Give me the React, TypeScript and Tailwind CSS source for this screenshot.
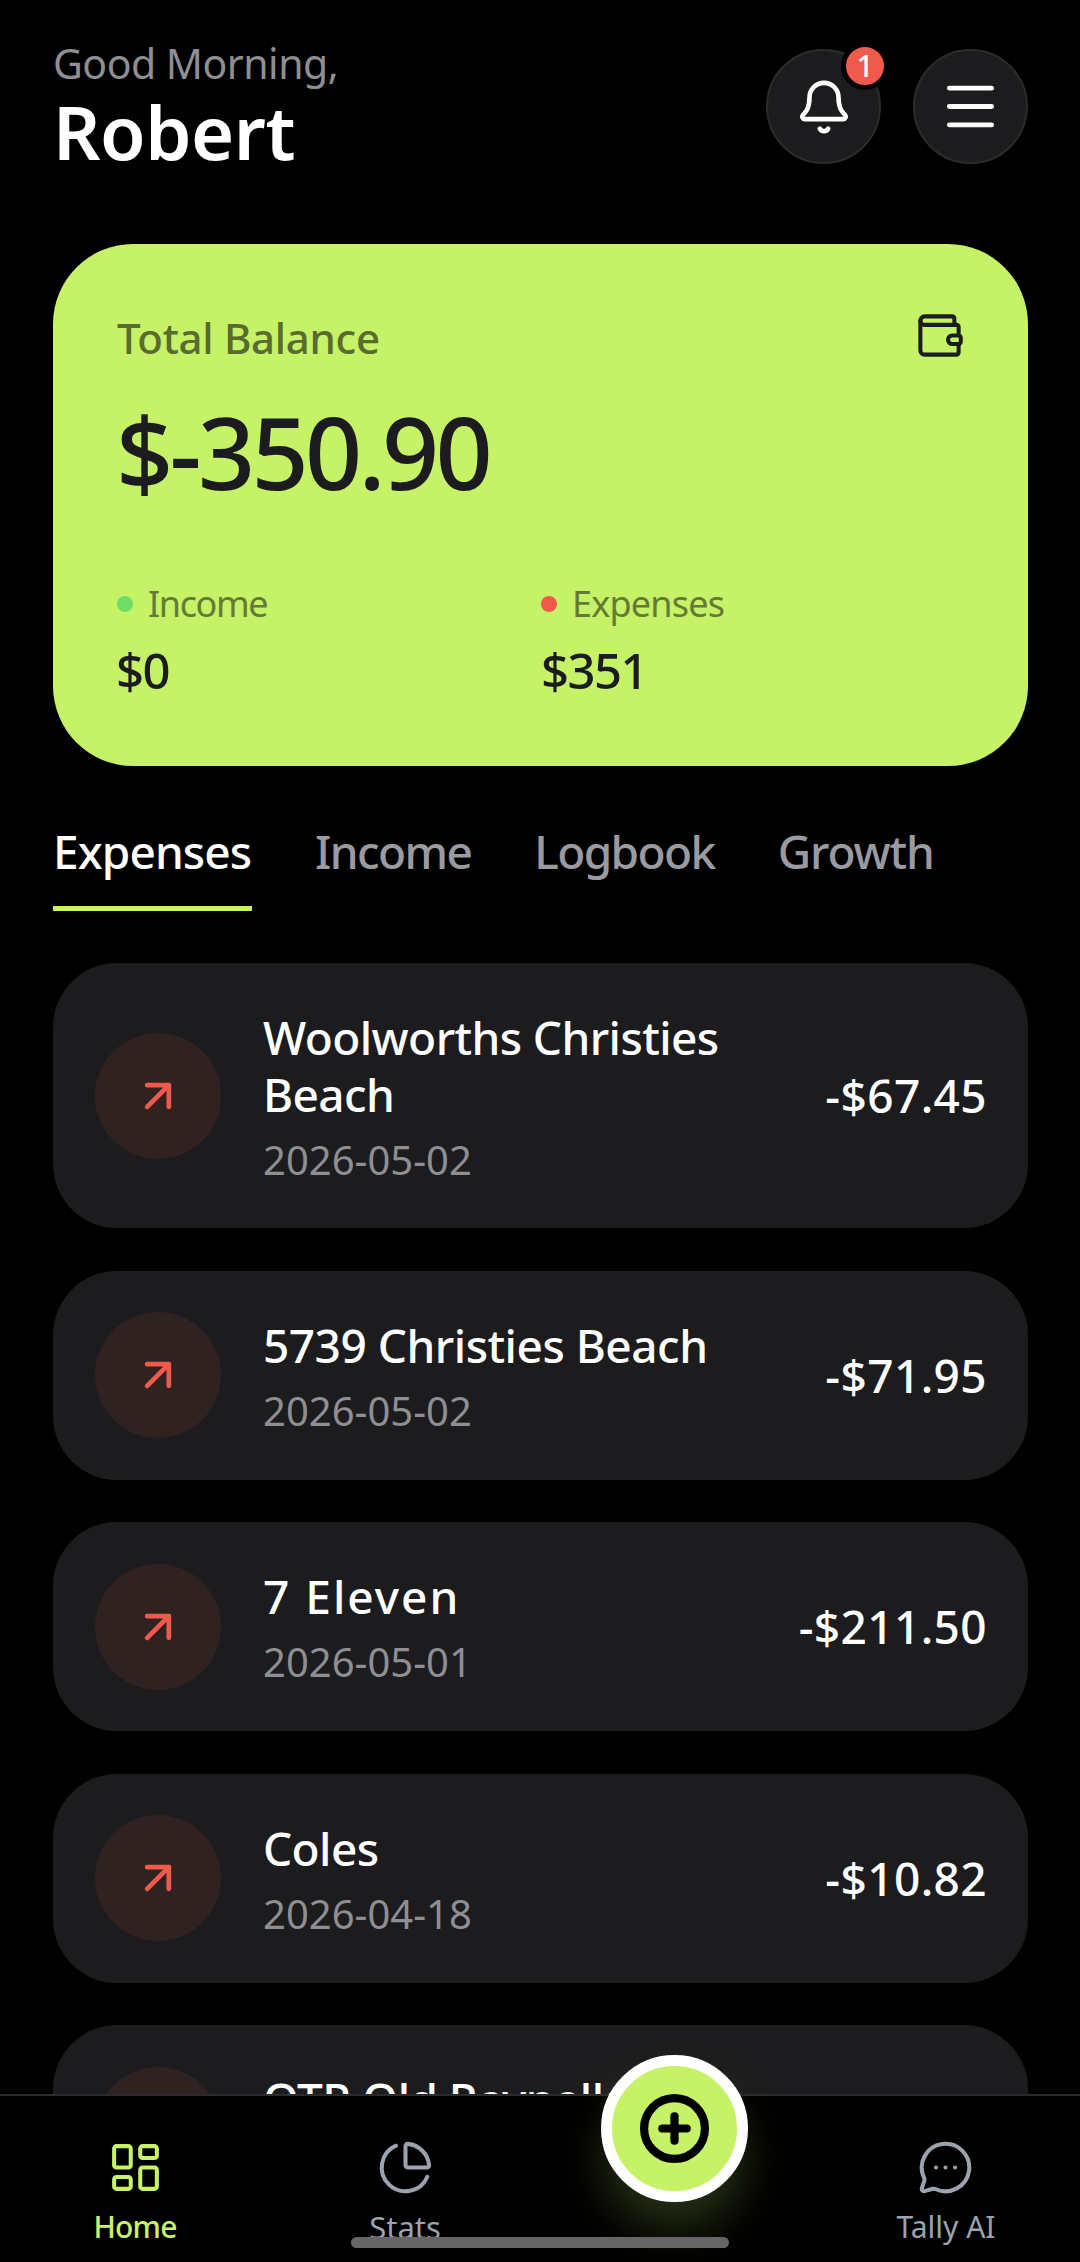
import { ArrowUpRight, Bell, ChartPie, CirclePlus, LayoutDashboard, Menu, MessageCircleMore, Wallet } from "lucide-react";

const transactions = [
  { name: "Woolworths Christies Beach", date: "2026-05-02", amount: "-$67.45", nameClass: "tracking-[-0.6px]" },
  { name: "5739 Christies Beach", date: "2026-05-02", amount: "-$71.95", nameClass: "tracking-[-0.5px]" },
  { name: "7 Eleven", date: "2026-05-01", amount: "-$211.50", nameClass: "tracking-[2px]" },
  { name: "Coles", date: "2026-04-18", amount: "-$10.82", nameClass: "tracking-[-0.6px]" },
  { name: "OTR Old Reynella", date: "2026-04-18", amount: "-$25.00", nameClass: "tracking-[-0.6px]" },
];

export default function App() {
  return (
    <div className="relative h-[2262px] w-[1080px] overflow-hidden bg-black font-['Noto_Sans',sans-serif] text-white">
      <header className="flex items-start justify-between pt-[37px] pr-[52px] pl-[53px]">
        <div>
          <div className="text-[41px] leading-[52px] tracking-[-0.5px] text-[#8e8e93]">Good Morning,</div>
          <div className="text-[74px] leading-[86px] font-semibold tracking-[-0.5px]">Robert</div>
        </div>
        <div className="mt-[12px] flex gap-[32px]">
          <button className="relative flex h-[115px] w-[115px] items-center justify-center rounded-full border-2 border-[#2c2c2e] bg-[#1c1c1e]">
            <Bell size={58} strokeWidth={1.9} />
            <span className="absolute top-[-9px] right-[-10px] box-content flex h-[38px] w-[38px] items-center justify-center rounded-full border-[5px] border-black bg-[#ef5a4c] text-[30px] leading-none font-medium">
              1
            </span>
          </button>
          <button className="flex h-[115px] w-[115px] items-center justify-center rounded-full border-2 border-[#2c2c2e] bg-[#1c1c1e]">
            <Menu size={63} strokeWidth={1.9} />
          </button>
        </div>
      </header>

      <section className="mt-[69px] mr-[52px] ml-[53px] h-[522px] rounded-[80px] bg-[#c5f266] px-[64px] pt-[68px] text-[#1c1c1e]">
        <div className="flex items-start justify-between">
          <div className="text-[42px] leading-[52px] font-medium tracking-[-0.3px] text-[#5a6b2f]">Total Balance</div>
          <Wallet size={51} strokeWidth={1.9} className="-mt-[2px] -mr-[1px]" />
        </div>
        <div className="mt-[28px] -ml-[1px] text-[100px] leading-[118px] font-medium tracking-[-3.7px]">$-350.90</div>
        <div className="mt-[71px] flex">
          <div className="w-[424px]">
            <div className="flex items-center gap-[15px] text-[36px] leading-[46px] tracking-[-1.4px] text-[#667a35]">
              <span className="h-[16px] w-[16px] rounded-full bg-[#6fdc66]" />
              Income
            </div>
            <div className="mt-[14px] -ml-[1px] text-[49px] leading-[58px] font-medium tracking-[-1.5px]">$0</div>
          </div>
          <div>
            <div className="flex items-center gap-[15px] text-[36px] leading-[46px] tracking-[-0.8px] text-[#667a35]">
              <span className="h-[16px] w-[16px] rounded-full bg-[#ef5a4c]" />
              Expenses
            </div>
            <div className="mt-[14px] text-[49px] leading-[58px] font-medium tracking-[-1.5px]">$351</div>
          </div>
        </div>
      </section>

      <nav className="mt-[55px] mr-[52px] ml-[53px] flex gap-[63px] text-[46px] leading-[60px] font-medium tracking-[-1.6px] text-[#9a9aa0]">
        <div className="h-[90px] w-[199px] border-b-[5px] border-[#c6f368] tracking-[-0.9px] text-white">Expenses</div>
        <div>Income</div>
        <div>Logbook</div>
        <div className="tracking-[-1.1px]">Growth</div>
      </nav>

      <div className="mt-[52px] mr-[52px] ml-[53px] flex flex-col gap-[42.5px]">
        {transactions.map((t) => (
          <div key={t.name} className="flex items-center rounded-[64px] bg-[#1c1c1e] py-[41.5px] pr-[41px] pl-[42px]">
            <div className="flex h-[126px] w-[126px] shrink-0 items-center justify-center rounded-full bg-[#2f2220]">
              <ArrowUpRight size={52} strokeWidth={2.2} className="text-[#ef5a4c]" />
            </div>
            <div className="ml-[42px] min-w-0 flex-1 pt-[4px] pr-[90px]">
              <div className={`text-[46px] leading-[57px] font-medium ${t.nameClass}`}>{t.name}</div>
              <div className="mt-[10px] text-[40px] leading-[54px] text-[#8e8e93]">{t.date}</div>
            </div>
            <div className="shrink-0 text-[46px] font-medium tracking-[0.4px]">{t.amount}</div>
          </div>
        ))}
      </div>

      {/* bottom bar sits over the list */}
      <div className="absolute right-0 bottom-0 left-0 flex h-[168px] border-t-2 border-[#2c2c2e] bg-black pt-[43px]">
        <div className="flex w-[270px] flex-col items-center text-[#c6f368]">
          <LayoutDashboard size={57} strokeWidth={1.7} />
          <span className="mt-[11px] text-[30px] leading-[40px] font-medium tracking-[-0.8px]">Home</span>
        </div>
        <div className="flex w-[270px] flex-col items-center text-[#9ca3af]">
          <ChartPie size={57} strokeWidth={1.7} />
          <span className="mt-[11px] text-[31px] leading-[40px]">Stats</span>
        </div>
        <div className="w-[270px]" />
        <div className="flex w-[270px] flex-col items-center text-[#9ca3af]">
          <MessageCircleMore size={57} strokeWidth={1.7} />
          <span className="mt-[11px] ml-[2px] text-[30px] leading-[40px]">Tally AI</span>
        </div>
      </div>
      <div className="absolute top-[2055px] left-[601px] flex h-[147px] w-[147px] items-center justify-center rounded-full border-[11px] border-white bg-[#c5f266] shadow-[0_30px_50px_-5px_rgba(198,243,104,0.22)]">
        <CirclePlus size={73} strokeWidth={2.7} className="text-black" />
      </div>
      <div className="absolute top-[2237px] left-[351px] h-[11px] w-[378px] rounded-full bg-[#666666]" />
    </div>
  );
}
